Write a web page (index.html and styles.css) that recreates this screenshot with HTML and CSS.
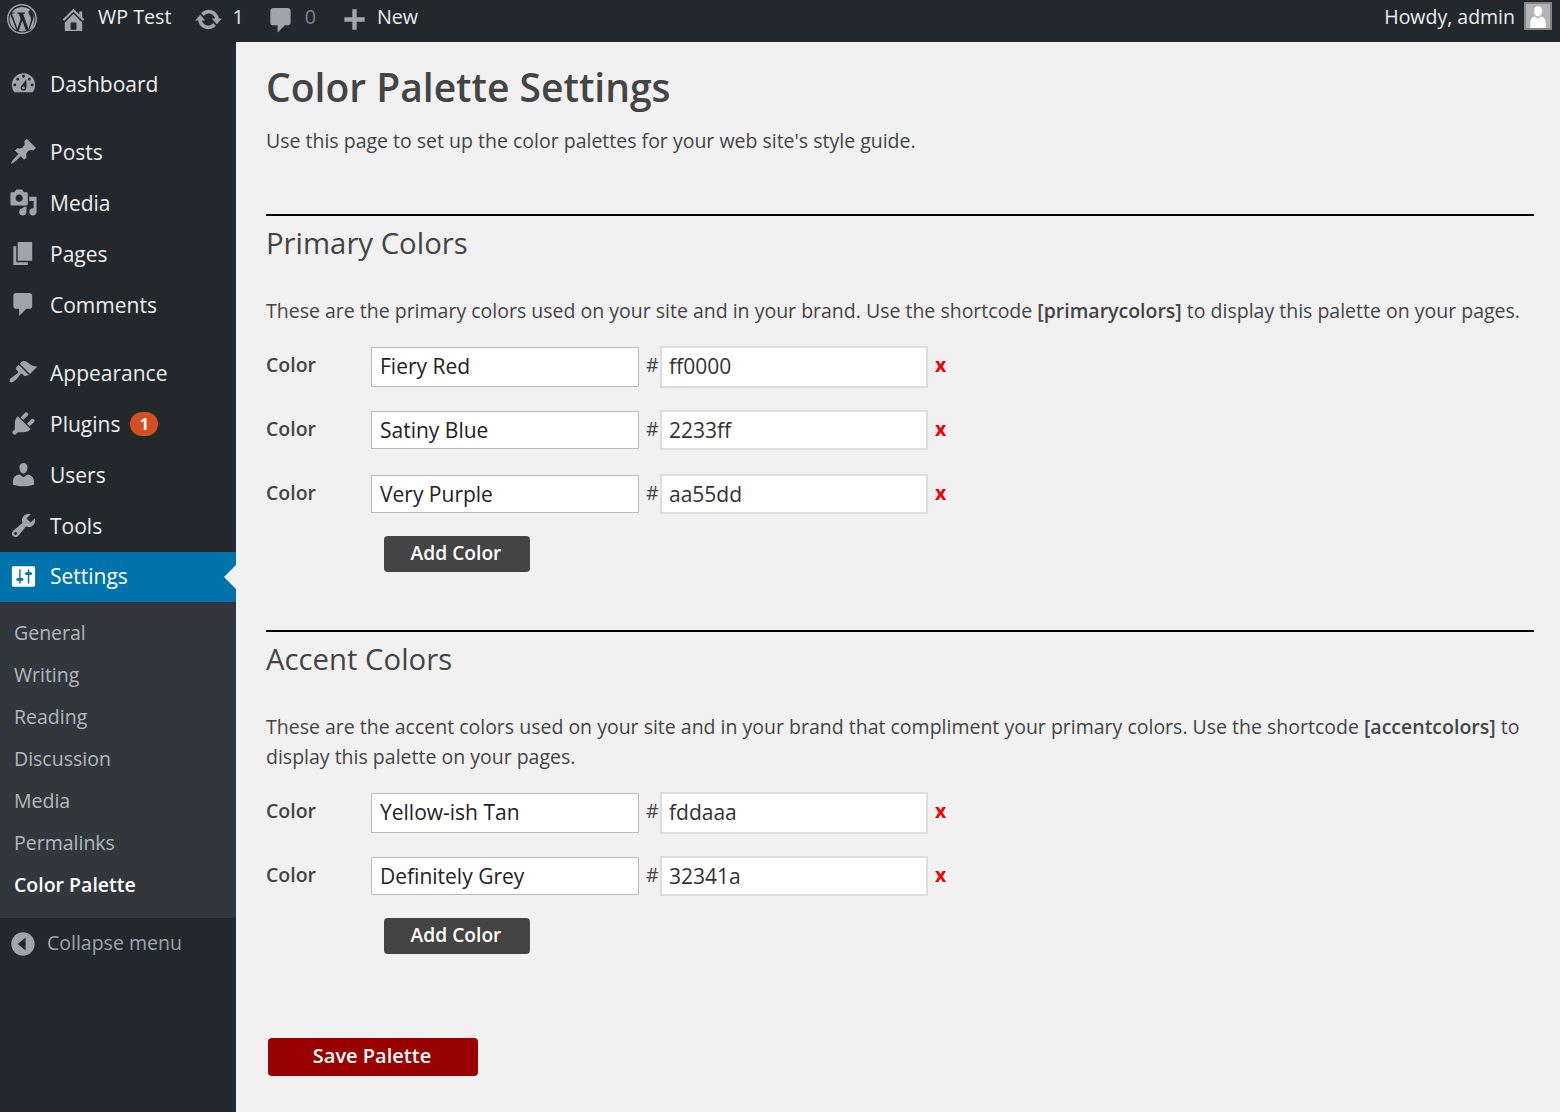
FILE: index.html
```html
<!DOCTYPE html>
<html lang="en">
<head>
    <meta charset="UTF-8">
    <meta name="viewport" content="width=device-width, initial-scale=1.0">
    <title>Color Palette Settings</title>
    <link rel="stylesheet" href="styles.css">
</head>
<body>

<header class="topbar">
    <div class="topbar-left">
        <span class="bar-item logo">
            <svg class="bar-icon" viewBox="0 0 20 20"><path fill-rule="evenodd" d="M10 0C4.48 0 0 4.48 0 10s4.48 10 10 10 10-4.48 10-10S15.52 0 10 0zm0 1C15 1 19 5 19 10s-4 9-9 9-9-4-9-9 4-9 9-9zM3.3 6.3l3.6 10.2 2.2-6.5-1.2-3.4-1 -.1v-.8h5v.8l-1.1.1 3.5 10 1-3.3c.5-1.6.7-2.400.7-3.100 0-1.200-.4-2-.8-2.600-.5-.8-.9-1.400-.9-2.100 0-.8.6-1.400 1.300-1.500C14.100 2.800 12.100 2 10 2 7.200 2 4.700 3.500 3.200 5.600h1.900v.8l-1.800-.1zM17.600 6.600c.1.400.1.800.1 1.300 0 1-.2 2.100-.7 3.500l-2.600 7.100C17 16.800 18.300 14 18.300 10c0-1.200-.3-2.400-.7-3.400zM10.200 11l-2.400 7c.7.200 1.400.300 2.200.300.900 0 1.800-.2 2.600-.5L10.200 11zM2.200 7C1.900 7.900 1.700 8.900 1.700 10c0 3.300 1.900 6.100 4.700 7.500L2.200 7z"/></svg>
        </span>
        <span class="bar-item site">
            <svg class="bar-icon" viewBox="0 0 20 20"><path d="M16 8.500l1.530 1.530-1.060 1.060L10 4.620l-6.470 6.470-1.060-1.060L10 2.500l4 4v-2h2v4zm-6-2.460l6 5.990V18H4v-5.970zM12 17v-5H8v5h4z"/></svg>
            <span class="bar-text">WP Test</span>
        </span>
        <span class="bar-item updates">
            <svg class="bar-icon" viewBox="0 0 20 20"><path d="M10.200 3.280c3.530 0 6.430 2.610 6.920 6h2.080l-3.500 4-3.500-4h2.320c-.45-1.970-2.210-3.450-4.320-3.450-1.450 0-2.730.71-3.540 1.780L4.950 5.660C6.230 4.200 8.110 3.280 10.200 3.280zm-.4 13.440c-3.520 0-6.430-2.610-6.920-6H.8l3.500-4c1.170 1.330 2.330 2.670 3.500 4H5.480c.45 1.970 2.210 3.450 4.320 3.450 1.450 0 2.730-.71 3.540-1.780l1.710 1.950c-1.280 1.460-3.150 2.380-5.250 2.380z"/></svg>
            <span class="bar-text">1</span>
        </span>
        <span class="bar-item comments">
            <svg class="bar-icon" viewBox="0 0 20 20"><path d="M5 2h10c1.100 0 2 .9 2 2v8c0 1.100-.9 2-2 2h-2l-5 5v-5H5c-1.100 0-2-.9-2-2V4c0-1.100.9-2 2-2z"/></svg>
            <span class="bar-text muted">0</span>
        </span>
        <span class="bar-item new">
            <svg class="bar-icon" viewBox="0 0 20 20"><path d="M17 8.500v3h-5.500V17h-3v-5.500H3v-3h5.500V3h3v5.500H17z"/></svg>
            <span class="bar-text">New</span>
        </span>
    </div>
    <div class="topbar-right">
        <span class="bar-text">Howdy, admin</span>
        <span class="avatar">
            <svg viewBox="0 0 20 20"><path d="M10 10.500c-2.300 0-3.400-3-3.400-5C6.600 3.300 8 1.800 10 1.800s3.400 1.500 3.400 3.700c0 2-1.100 5-3.400 5zm0 1.500l2.600-1.500c2.400.3 3.800 2.600 3.800 5.500V20H3.600v-4c0-2.900 1.400-5.200 3.800-5.500z"/></svg>
        </span>
    </div>
</header>

<div class="layout">
    <nav class="sidebar">
        <ul class="menu menu-first">
            <li class="menu-item">
                <svg class="menu-icon" viewBox="0 0 20 20"><path fill-rule="evenodd" d="M3.760 16h12.480c1.100-1.370 1.760-3.110 1.760-5 0-4.420-3.580-8-8-8s-8 3.580-8 8c0 1.890.66 3.630 1.760 5zM10 4c.55 0 1 .45 1 1s-.45 1-1 1-1-.45-1-1 .45-1 1-1zM6 6c.55 0 1 .45 1 1s-.45 1-1 1-1-.45-1-1 .45-1 1-1zm8 0c.55 0 1 .45 1 1s-.45 1-1 1-1-.45-1-1 .45-1 1-1zm-5.370 5.550L12 7v6c0 1.100-.9 2-2 2s-2-.9-2-2c0-.57.24-1.080.63-1.450zM4 10c.55 0 1 .45 1 1s-.45 1-1 1-1-.45-1-1 .45-1 1-1zm12 0c.55 0 1 .45 1 1s-.45 1-1 1-1-.45-1-1 .45-1 1-1zm-5 3c0-.55-.45-1-1-1s-1 .45-1 1 .45 1 1 1 1-.45 1-1z"/></svg>
                Dashboard
            </li>
        </ul>
        <ul class="menu">
            <li class="menu-item">
                <svg class="menu-icon" viewBox="0 0 20 20"><path d="M10.440 3.020l1.820-1.820 6.360 6.350-1.830 1.820c-1.050-.68-2.480-.57-3.410.36l-.75.75c-.92.93-1.040 2.350-.35 3.410l-1.830 1.820-2.410-2.410-2.800 2.790c-.42.42-3.380 2.710-3.800 2.290s1.860-3.390 2.280-3.810l2.790-2.790L4.100 9.360l1.830-1.820c1.050.69 2.480.57 3.400-.36l.75-.75c.93-.92 1.050-2.350.36-3.410z"/></svg>
                Posts
            </li>
            <li class="menu-item">
                <svg class="menu-icon" viewBox="0 0 20 20"><path fill-rule="evenodd" d="M13 11V4c0-.55-.45-1-1-1h-1.670L9 1H5L3.670 3H2c-.55 0-1 .45-1 1v7c0 .55.45 1 1 1h10c.55 0 1-.45 1-1zM7 4.500c1.380 0 2.500 1.120 2.500 2.500S8.380 9.500 7 9.500 4.500 8.380 4.500 7 5.620 4.500 7 4.500zM14 6h5v10.500c0 1.380-1.120 2.500-2.500 2.500S14 17.880 14 16.500s1.120-2.500 2.500-2.500c.17 0 .34.02.5.05V9h-3V6zm-4 8.050V13h2v3.500c0 1.380-1.120 2.500-2.500 2.500S7 17.880 7 16.500 8.120 14 9.500 14c.17 0 .34.02.5.05z"/></svg>
                Media
            </li>
            <li class="menu-item">
                <svg class="menu-icon" viewBox="0 0 20 20"><path d="M6 15V2h10v13H6zm-1 1h8v2H3V5h2v11z"/></svg>
                Pages
            </li>
            <li class="menu-item">
                <svg class="menu-icon" viewBox="0 0 20 20"><path d="M5 2h9c1.100 0 2 .9 2 2v7c0 1.100-.9 2-2 2h-2l-5 5v-5H5c-1.100 0-2-.9-2-2V4c0-1.100.9-2 2-2z"/></svg>
                Comments
            </li>
        </ul>
        <ul class="menu">
            <li class="menu-item">
                <svg class="menu-icon" viewBox="0 0 20 20"><path d="M14.480 11.060L7.410 3.990l1.500-1.500c.5-.56 2.300-.47 3.510.32 1.210.8 1.430 1.280 2.910 2.100 1.180.64 2.450 1.260 4.450.85zm-.71.71L6.700 4.700 4.930 6.470c-.39.39-.39 1.020 0 1.410l1.060 1.060c.39.39.39 1.030 0 1.420-.6.6-1.430 1.110-2.210 1.690-.35.26-.7.53-1.010.84C1.430 13.230.4 14.890.4 15.700c0 .3.12.6.33.8s.5.33.8.33c.81 0 2.470-1.030 3.820-2.370.3-.31.57-.66.83-1.010.58-.78 1.090-1.610 1.690-2.210.39-.39 1.030-.39 1.420 0l1.060 1.060c.39.39 1.020.39 1.410 0z"/></svg>
                Appearance
            </li>
            <li class="menu-item">
                <svg class="menu-icon" viewBox="0 0 20 20"><path d="M13.110 4.360L9.870 7.600 8 5.730l3.240-3.240c.35-.34 1.050-.2 1.560.32.52.51.66 1.210.31 1.550zm-8 1.770l.91-1.120 9.010 9.010-1.190.84c-.71.71-2.630 1.160-3.820 1.160H6.140L4.900 17.260c-.59.59-1.540.59-2.120 0-.59-.58-.59-1.530 0-2.120l1.240-1.240v-3.880c0-1.130.4-3.190 1.090-3.890zm7.260 3.970l3.240-3.240c.34-.35 1.040-.21 1.550.31.52.51.66 1.210.31 1.550l-3.240 3.250z"/></svg>
                Plugins
                <span class="count">1</span>
            </li>
            <li class="menu-item">
                <svg class="menu-icon" viewBox="0 0 20 20"><path d="M10 9.250c-2.270 0-2.730-3.440-2.730-3.440C7 4.020 7.820 2 9.970 2c2.160 0 2.980 2.020 2.710 3.810 0 0-.41 3.440-2.680 3.440zm0 2.570L12.720 10c2.390 0 4.520 2.330 4.520 4.530v2.490s-3.650 1.130-7.240 1.130c-3.650 0-7.240-1.130-7.240-1.130v-2.490c0-2.250 1.940-4.480 4.470-4.480z"/></svg>
                Users
            </li>
            <li class="menu-item">
                <svg class="menu-icon" viewBox="0 0 20 20"><path fill-rule="evenodd" d="M16.680 9.770c-1.340 1.340-3.300 1.670-4.950.99l-5.410 6.520c-.99.99-2.590.99-3.580 0s-.99-2.590 0-3.570l6.520-5.420c-.68-1.650-.35-3.610.99-4.950 1.280-1.280 3.120-1.620 4.720-1.060l-2.890 2.890 2.820 2.820 2.860-2.870c.53 1.580.18 3.390-1.080 4.650zM3.810 16.210c.4.39 1.040.39 1.430 0 .4-.4.4-1.040 0-1.430-.39-.4-1.030-.4-1.430 0-.39.39-.39 1.030 0 1.430z"/></svg>
                Tools
            </li>
            <li class="menu-item current">
                <svg class="menu-icon" viewBox="0 0 20 20"><path fill-rule="evenodd" d="M18 16V4c0-.55-.45-1-1-1H3c-.55 0-1 .45-1 1v12c0 .55.45 1 1 1h14c.55 0 1-.45 1-1zM8 11h1c.55 0 1 .45 1 1s-.45 1-1 1H8v1.500c0 .28-.22.5-.5.5s-.5-.22-.5-.5V13H6c-.55 0-1-.45-1-1s.45-1 1-1h1V5.500c0-.28.22-.5.5-.5s.5.22.5.5V11zm5-2h-1c-.55 0-1-.45-1-1s.45-1 1-1h1V5.500c0-.28.22-.5.5-.5s.5.22.5.5V7h1c.55 0 1 .45 1 1s-.45 1-1 1h-1v5.500c0 .28-.22.5-.5.5s-.5-.22-.5-.5V9z"/></svg>
                Settings
            </li>
        </ul>
        <ul class="submenu">
            <li>General</li>
            <li>Writing</li>
            <li>Reading</li>
            <li>Discussion</li>
            <li>Media</li>
            <li>Permalinks</li>
            <li class="sub-current">Color Palette</li>
        </ul>
        <div class="collapse">
            <svg class="menu-icon" viewBox="0 0 20 20"><path fill-rule="evenodd" d="M10 19c5 0 9-4 9-9s-4-9-9-9-9 4-9 9 4 9 9 9zm2-14v10l-6-5 6-5z"/></svg>
            Collapse menu
        </div>
    </nav>

    <main class="content">
        <h1>Color Palette Settings</h1>
        <p class="intro">Use this page to set up the color palettes for your web site's style guide.</p>

        <section class="palette">
            <h2>Primary Colors</h2>
            <p class="desc">These are the primary colors used on your site and in your brand. Use the shortcode <strong>[primarycolors]</strong> to display this palette on your pages.</p>
            <div class="color-row">
                <label class="color-label">Color</label>
                <input class="name-input" type="text" value="Fiery Red">
                <span class="hash">#</span>
                <input class="hex-input" type="text" value="ff0000">
                <span class="remove">x</span>
            </div>
            <div class="color-row">
                <label class="color-label">Color</label>
                <input class="name-input" type="text" value="Satiny Blue">
                <span class="hash">#</span>
                <input class="hex-input" type="text" value="2233ff">
                <span class="remove">x</span>
            </div>
            <div class="color-row">
                <label class="color-label">Color</label>
                <input class="name-input" type="text" value="Very Purple">
                <span class="hash">#</span>
                <input class="hex-input" type="text" value="aa55dd">
                <span class="remove">x</span>
            </div>
            <button type="button" class="add-btn">Add Color</button>
        </section>

        <section class="palette">
            <h2>Accent Colors</h2>
            <p class="desc">These are the accent colors used on your site and in your brand that compliment your primary colors. Use the shortcode <strong>[accentcolors]</strong> to display this palette on your pages.</p>
            <div class="color-row">
                <label class="color-label">Color</label>
                <input class="name-input" type="text" value="Yellow-ish Tan">
                <span class="hash">#</span>
                <input class="hex-input" type="text" value="fddaaa">
                <span class="remove">x</span>
            </div>
            <div class="color-row">
                <label class="color-label">Color</label>
                <input class="name-input" type="text" value="Definitely Grey">
                <span class="hash">#</span>
                <input class="hex-input" type="text" value="32341a">
                <span class="remove">x</span>
            </div>
            <button type="button" class="add-btn">Add Color</button>
        </section>

        <button type="button" class="save-btn">Save Palette</button>
    </main>
</div>

</body>
</html>
```

FILE: styles.css
```css
* {
    box-sizing: border-box;
}

html,
body {
    height: 100%;
}

body {
    font-family: 'Open Sans', sans-serif;
    font-size: 19.5px;
    color: #444;
    background-color: #f1f1f1;
    margin: 0;
    padding: 0;
    overflow: hidden;
}

/* top bar */
.topbar {
    height: 42px;
    background-color: #23282d;
    color: #eee;
    font-size: 19.7px;
    display: flex;
    justify-content: space-between;
    align-items: center;
    padding-left: 7px;
}

.topbar-left,
.topbar-right,
.bar-item {
    display: flex;
    align-items: center;
}

.bar-icon {
    width: 29px;
    height: 29px;
    fill: #a0a5aa;
    display: block;
    margin-bottom: 4px;
}

.bar-text {
    line-height: 34px;
    margin-bottom: 8px;
}

.topbar-right .bar-text {
    font-size: 19.5px;
}

.muted {
    color: #7d8287;
}

.logo {
    margin-right: 22px;
}

.logo .bar-icon {
    width: 30px;
    height: 30px;
}

.site .bar-icon {
    margin-right: 10px;
}

.site {
    margin-right: 23px;
}

.updates .bar-icon {
    margin-right: 9px;
}

.updates {
    margin-right: 22px;
}

.comments .bar-icon {
    margin-right: 10px;
}

.comments {
    margin-right: 24px;
}

.new .bar-icon {
    margin-right: 8px;
}

.topbar-right {
    padding-right: 8px;
}

.avatar {
    width: 28px;
    height: 28px;
    margin-left: 9px;
    margin-bottom: 10px;
    border: 2px solid #82878c;
    background-color: #b4b4b4;
    overflow: hidden;
}

.avatar svg {
    display: block;
    width: 100%;
    height: 100%;
    fill: #fff;
}

/* sidebar */
.layout {
    display: flex;
    height: 1070px;
}

.sidebar {
    width: 236px;
    flex-shrink: 0;
    background-color: #23282d;
    color: #eee;
}

.menu,
.submenu {
    list-style: none;
    margin: 0;
    padding: 0;
}

.menu {
    padding-top: 17px;
    font-size: 21px;
}

.menu-first {
    padding-top: 16px;
}

.menu-item {
    height: 51px;
    display: flex;
    align-items: center;
    padding-left: 9px;
    position: relative;
}

.menu-icon {
    width: 29px;
    height: 29px;
    fill: #a0a5aa;
    margin-right: 12px;
    flex-shrink: 0;
}

.count {
    width: 28px;
    height: 24px;
    margin-left: 10px;
    border-radius: 12px;
    background-color: #d54e21;
    color: #fff;
    font-size: 16px;
    font-weight: 700;
    text-align: center;
    line-height: 24px;
}

.current {
    height: 50px;
    margin-top: 1px;
    padding-bottom: 2px;
    background-color: #0073aa;
    color: #fff;
}

.current .menu-icon {
    fill: #fff;
}

.current::after {
    content: "";
    position: absolute;
    right: 0;
    top: 13px;
    border: 12px solid transparent;
    border-right-color: #f1f1f1;
    border-left-width: 0;
}

.submenu {
    background-color: #32373c;
    color: #b4b9be;
    padding: 10px 0 12px 14px;
}

.submenu li {
    height: 42px;
    line-height: 42px;
}

.sub-current {
    color: #fff;
    font-weight: 600;
}

.collapse {
    display: flex;
    align-items: center;
    height: 48px;
    padding-left: 10px;
    color: #a0a5aa;
}

.collapse .menu-icon {
    width: 26px;
    height: 26px;
    margin-top: 4px;
    margin-right: 11px;
}

/* main column */
.content {
    flex: 1;
    padding: 0 26px 0 30px;
}

h1 {
    font-size: 39px;
    font-weight: 600;
    line-height: 50px;
    margin: 20px 0 0;
}

.intro {
    line-height: 30px;
    margin: 14px 0 0;
}

.palette {
    border-top: 2px solid #000;
    margin-top: 58px;
    padding-top: 7px;
}

h2 {
    font-size: 29.3px;
    font-weight: 400;
    line-height: 40px;
    margin: 0;
}

.desc {
    line-height: 30px;
    margin: 33px 0 20px;
}

.desc strong {
    font-weight: 600;
}

.color-row {
    display: flex;
    align-items: flex-start;
    height: 64px;
}

.color-label {
    width: 105px;
    font-weight: 600;
    line-height: 38px;
}

.name-input,
.hex-input {
    font-family: inherit;
    font-size: 21px;
    color: #222;
    background-color: #fff;
    border-radius: 0;
    outline: none;
    padding-bottom: 2px;
}

.name-input {
    width: 268px;
    height: 38px;
    border: 1px solid #bbb;
    padding-left: 8px;
    margin-top: 1px;
}

.hex-input {
    width: 268px;
    height: 40px;
    border: 2px solid #ddd;
    padding-left: 7px;
    color: #333;
}

.color-row:first-of-type .name-input {
    height: 40px;
    padding-bottom: 4px;
}

.color-row:first-of-type .hex-input {
    height: 42px;
    padding-bottom: 4px;
}

.hash {
    width: 21px;
    padding-left: 7px;
    line-height: 38px;
}

.remove {
    color: #e00;
    font-weight: 700;
    line-height: 38px;
    margin-left: 7px;
}

.add-btn,
.save-btn {
    display: block;
    font-family: inherit;
    font-size: 20px;
    font-weight: 600;
    color: #fff;
    border: none;
    border-radius: 4px;
    cursor: pointer;
    padding: 0 2px 3px 0;
}

.add-btn {
    width: 146px;
    height: 36px;
    margin-left: 118px;
    margin-top: -2px;
    font-size: 19.2px;
    background-color: #444;
}

.save-btn {
    width: 210px;
    height: 38px;
    margin: 84px 0 0 2px;
    background-color: #900;
}
```
